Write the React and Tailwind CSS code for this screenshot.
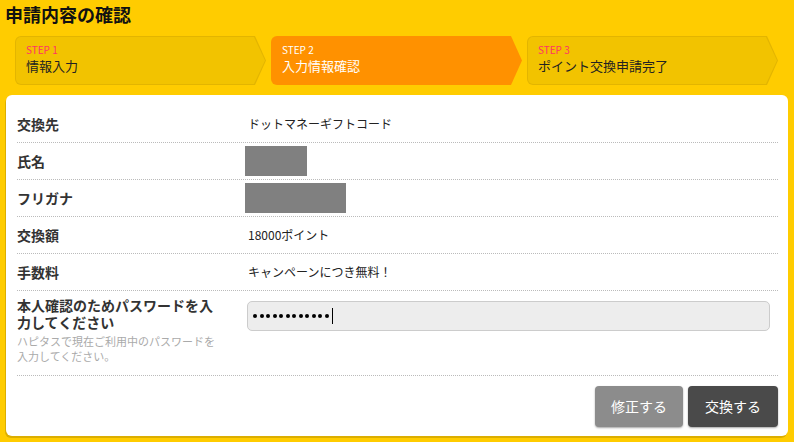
const steps = [
  { no: "STEP 1", label: "情報入力", active: false },
  { no: "STEP 2", label: "入力情報確認", active: true },
  { no: "STEP 3", label: "ポイント交換申請完了", active: false },
];

function Step({ no, label, active }) {
  if (active) {
    return (
      <div className="h-[49px] w-[251px] rounded-l-[6px] bg-[#ff9100] pl-[11px] pt-[8px] text-white [clip-path:polygon(0_0,calc(100%_-_11px)_0,100%_50%,calc(100%_-_11px)_100%,0_100%)]">
        <p className="text-[10px] leading-[12px]">{no}</p>
        <p className="mt-[2px] text-[13px] leading-[16px]">{label}</p>
      </div>
    );
  }
  return (
    <div className="relative h-[49px] w-[251px] rounded-l-[6px] bg-[#e3b500] [clip-path:polygon(0_0,calc(100%_-_11px)_0,100%_50%,calc(100%_-_11px)_100%,0_100%)]">
      <div className="absolute inset-[1px] rounded-l-[5px] bg-[#f2c300] pl-[10px] pt-[7px] [clip-path:polygon(0_0,calc(100%_-_11px)_0,100%_50%,calc(100%_-_11px)_100%,0_100%)]">
        <p className="text-[10px] leading-[12px] text-[#ff3366]">{no}</p>
        <p className="mt-[2px] text-[13px] leading-[16px] text-[#222]">{label}</p>
      </div>
    </div>
  );
}

function Row({ label, children }) {
  return (
    <div className="flex h-[37px] items-center border-b border-dotted border-[#bbbbbb]">
      <div className="w-[231px] shrink-0 text-[14px] font-bold text-[#333]">{label}</div>
      <div className="text-[12px] text-[#222]">{children}</div>
    </div>
  );
}

export default function App() {
  return (
    <div
      className="h-[442px] w-[794px] overflow-hidden bg-[#ffcc00]"
      style={{ fontFamily: '"Noto Sans CJK JP", "Noto Sans", sans-serif' }}
    >
      <h1 className="h-[36px] pl-[5px] pt-[2px] text-[18px] font-bold leading-[24px] text-[#111]">
        申請内容の確認
      </h1>

      <div className="ml-[15px] flex gap-[5px]">
        {steps.map((s) => (
          <Step key={s.no} {...s} />
        ))}
      </div>

      <div className="ml-[6px] mt-[10px] h-[341px] w-[782px] rounded-[6px] bg-white px-[11px] pt-[11px] shadow-[-1px_2px_0_#dcae00]">
        <div className="mr-[-1px]">
          <Row label="交換先">ドットマネーギフトコード</Row>
          <Row label="氏名">
            <div className="ml-[-3px] h-[30px] w-[62px] bg-[#808080]" />
          </Row>
          <Row label="フリガナ">
            <div className="ml-[-3px] h-[30px] w-[101px] bg-[#808080]" />
          </Row>
          <Row label="交換額">18000ポイント</Row>
          <Row label="手数料">キャンペーンにつき無料！</Row>

          <div className="flex h-[85px] border-b border-dotted border-[#bbbbbb]">
            <div className="w-[230px] shrink-0 pt-[6px]">
              <p className="w-[200px] text-[14px] font-bold leading-[17px] text-[#333]">
                本人確認のためパスワードを入力してください
              </p>
              <p className="mt-[3px] w-[200px] text-[11px] leading-[15px] text-[#aaaaaa]">
                ハピタスで現在ご利用中のパスワードを入力してください。
              </p>
            </div>
            <div className="flex-1 pr-[8px] pt-[10px]">
              <div className="flex h-[30px] items-center rounded-[5px] border border-[#cccccc] bg-[#ededed] pl-[5px]">
                <div className="flex gap-[2.5px]">
                  {Array.from({ length: 12 }).map((_, i) => (
                    <span key={i} className="h-[4px] w-[4px] rounded-full bg-black" />
                  ))}
                </div>
                <span className="ml-[3px] h-[16px] w-px bg-black" />
              </div>
            </div>
          </div>

          <div className="flex justify-end gap-[5px] pt-[10px]">
            <button className="h-[41px] w-[88px] rounded-[4px] bg-[#8c8c8c] text-[14px] text-white shadow-[0_1px_2px_rgba(0,0,0,0.35)]">
              修正する
            </button>
            <button className="h-[41px] w-[90px] rounded-[4px] bg-[#4a4a4a] text-[14px] text-white shadow-[0_1px_2px_rgba(0,0,0,0.35)]">
              交換する
            </button>
          </div>
        </div>
      </div>
    </div>
  );
}
